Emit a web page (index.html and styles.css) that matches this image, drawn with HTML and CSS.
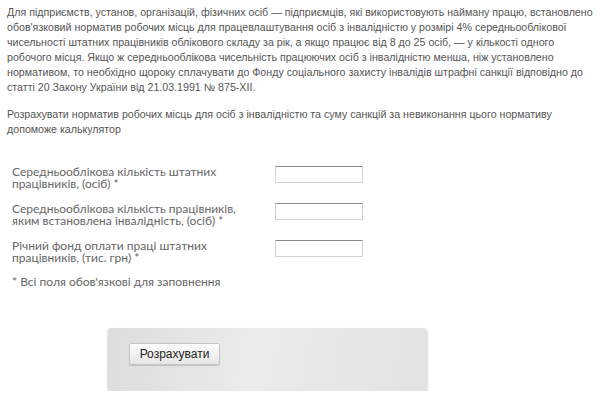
FILE: index.html
```html
<!DOCTYPE html>
<html lang="uk">
<head>
  <meta charset="UTF-8">
  <title>Калькулятор нормативу робочих місць</title>
  <link rel="stylesheet" href="styles.css">
</head>
<body>

  <div class="page">
    <p class="intro">Для підприємств, установ, організацій, фізичних осіб — підприємців, які використовують найману працю, встановлено обов'язковий норматив робочих місць для працевлаштування осіб з інвалідністю у розмірі 4% середньооблікової чисельності штатних працівників облікового складу за рік, а якщо працює від 8 до 25 осіб, — у кількості одного робочого місця. Якщо ж середньооблікова чисельність працюючих осіб з інвалідністю менша, ніж установлено нормативом, то необхідно щороку сплачувати до Фонду соціального захисту інвалідів штрафні санкції відповідно до статті 20 Закону України від 21.03.1991 № 875-XII.</p>

    <p class="intro">Розрахувати норматив робочих місць для осіб з інвалідністю та суму санкцій за невиконання цього нормативу допоможе калькулятор</p>

    <form class="calc" onsubmit="return false">
      <div class="row">
        <label class="label" for="staff">Середньооблікова кількість штатних працівників, (осіб) *</label>
        <input type="text" class="field" id="staff" />
      </div>
      <div class="row">
        <label class="label" for="disabled">Середньооблікова кількість працівників, яким встановлена інвалідність, (осіб) *</label>
        <input type="text" class="field" id="disabled" />
      </div>
      <div class="row">
        <label class="label" for="fund">Річний фонд оплати праці штатних працівників, (тис. грн) *</label>
        <input type="text" class="field" id="fund" />
      </div>

      <p class="note">* Всі поля обов'язкові для заповнення</p>

      <div class="panel">
        <button class="submit">Розрахувати</button>
      </div>
    </form>
  </div>

</body>
</html>
```

FILE: styles.css
```css
body {
  margin: 0;
  background: #fff;
  font-family: 'Liberation Sans', Arial, sans-serif;
}

.page {
  width: 586px;
  padding: 5px 7px 0;
}

.intro {
  margin: 0 0 12px;
  font-size: 10.65px;
  line-height: 15px;
  color: #555;
}

.calc {
  padding: 17px 0 0 5px;
}

.row {
  display: flex;
  align-items: flex-start;
  margin-bottom: 13px;
}

.label {
  width: 240px;
  margin-right: 23px;
  font-family: Lato, 'Open Sans', sans-serif;
  font-size: 12px;
  line-height: 12px;
  color: #666;
}

.field {
  width: 84px;
  height: 13px;
  padding: 1px;
  border: 1px solid #d4d4d4;
  border-top-color: #8a8a8a;
  background: #fff;
}

.note {
  margin: -2px 0 0;
  font-family: Lato, 'Open Sans', sans-serif;
  font-size: 12px;
  line-height: 14px;
  color: #666;
}

.panel {
  width: 319px;
  height: 63px;
  margin: 39px 0 0 96px;
  padding: 15px 0 0 21px;
  box-sizing: border-box;
  border-radius: 3px;
  background: linear-gradient(100deg, #dcdcdc 0%, #ebebeb 45%, #e2e2e2 100%);
  box-shadow: 0 2px 3px rgba(0, 0, 0, 0.25);
}

.submit {
  width: 91px;
  height: 22px;
  padding: 0;
  font-family: 'Liberation Sans', Arial, sans-serif;
  font-size: 12px;
  color: #222;
  border: 1px solid #c4c4c4;
  border-radius: 2px;
  background: linear-gradient(#fdfdfd, #e6e6e6);
  box-shadow: 0 1px 1px rgba(0, 0, 0, 0.15);
  cursor: pointer;
}
```
